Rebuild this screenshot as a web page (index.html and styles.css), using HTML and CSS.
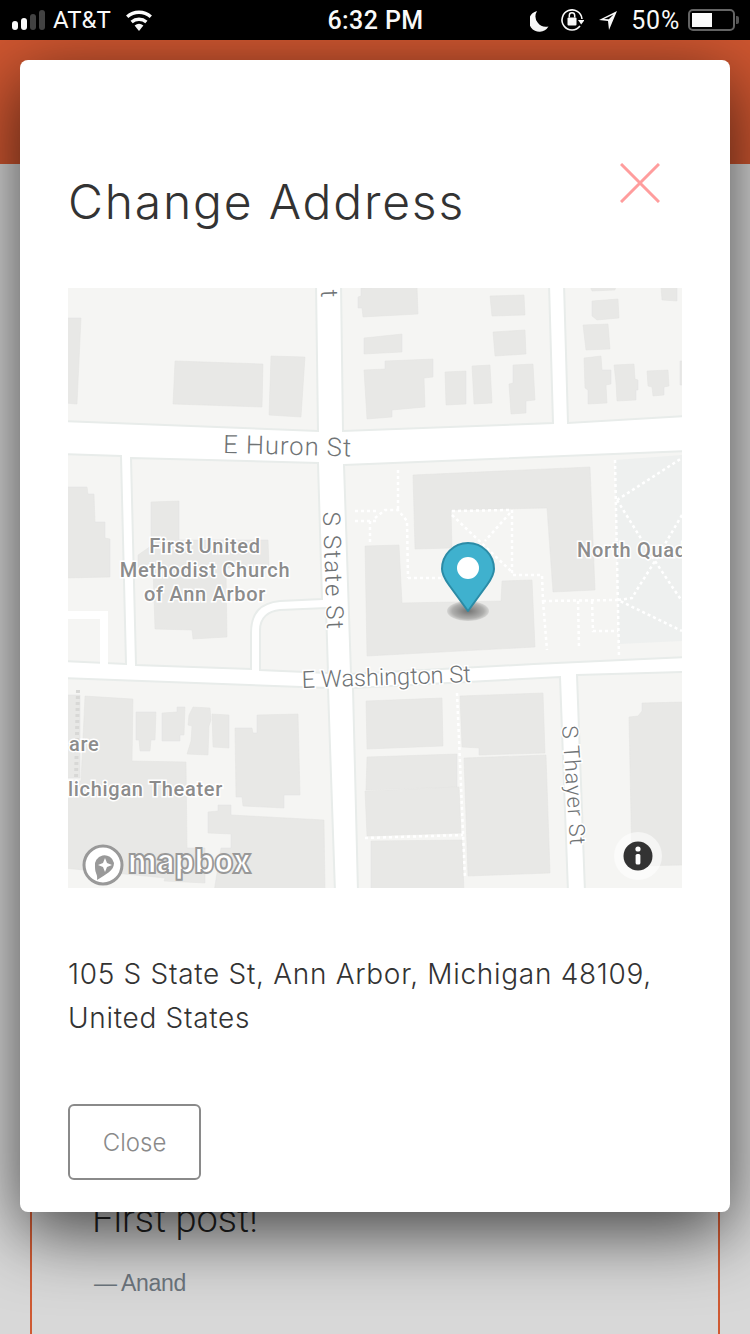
FILE: index.html
```html
<!DOCTYPE html>
<html lang="en">
<head>
    <meta charset="UTF-8">
    <meta name="viewport" content="width=device-width, initial-scale=1.0">
    <title>Change Address</title>
    <link rel="stylesheet" href="styles.css">
</head>
<body>

<div class="status-bar">
    <div class="status-left">
        <div class="signal">
            <span class="bar bar-1"></span>
            <span class="bar bar-2"></span>
            <span class="bar bar-3"></span>
            <span class="bar bar-4"></span>
        </div>
        <span class="carrier">AT&amp;T</span>
        <svg class="wifi" width="30" height="24" viewBox="0 0 30 24">
            <path d="M15 23 L10.6 17.6 A7 7 0 0 1 19.4 17.6 Z" fill="#fff"/>
            <path d="M7.6 14 A11.5 11.5 0 0 1 22.4 14" fill="none" stroke="#fff" stroke-width="3.4"/>
            <path d="M3.2 8.8 A17.6 17.6 0 0 1 26.8 8.8" fill="none" stroke="#fff" stroke-width="3.4"/>
        </svg>
    </div>
    <div class="status-time">6:32 PM</div>
    <div class="status-right">
        <svg class="moon" width="20" height="24" viewBox="0 0 20 24">
            <path d="M7 3 A10.5 10.5 0 0 0 18.5 18.5 A10.5 10.5 0 1 1 7 3 Z" fill="#fff"/>
        </svg>
        <svg class="lock" width="24" height="28" viewBox="0 0 24 28">
            <path d="M20 20 A10 10 0 1 1 22 13" fill="none" stroke="#fff" stroke-width="1.6"/>
            <path d="M18.5 13 L25 13 L21.7 17.5 Z" fill="#fff" transform="translate(-0.5 1)"/>
            <rect x="7.5" y="11.5" width="9" height="8" rx="1" fill="#fff"/>
            <path d="M9.3 11.5 V9.5 A2.7 2.7 0 0 1 14.7 9.5 V11.5" fill="none" stroke="#fff" stroke-width="1.5"/>
        </svg>
        <svg class="arrow" width="20" height="24" viewBox="0 0 20 24">
            <path d="M19 3 L1 12 L10 13 L11 22 Z M15.5 6.5 L10.8 11.3 L6 11 Z" fill="#fff" fill-rule="evenodd"/>
        </svg>
        <span class="percent">50%</span>
        <div class="battery"><span class="battery-level"></span></div>
        <span class="battery-tip"></span>
    </div>
</div>

<div class="site-header"></div>

<div class="main">
    <div class="post-card">
        <h2 class="post-title">First post!</h2>
        <p class="post-author">—&#8201;Anand</p>
    </div>
</div>

<div class="modal">
    <div class="modal-head">
        <h1 class="modal-title">Change Address</h1>
        <svg class="modal-close" width="40" height="40" viewBox="0 0 40 40">
            <path d="M1 1 L39 39 M39 1 L1 39" stroke="#ff9d9d" stroke-width="3" fill="none"/>
        </svg>
    </div>

    <svg class="map" width="614" height="600" viewBox="0 0 614 600">
        <defs>
            <radialGradient id="pinShadow">
                <stop offset="0" stop-color="#000" stop-opacity=".5"/>
                <stop offset=".75" stop-color="#000" stop-opacity=".25"/>
                <stop offset="1" stop-color="#000" stop-opacity=".08"/>
            </radialGradient>
        </defs>
        <rect width="614" height="600" fill="#fff"/>

        <!-- blocks -->
        <g class="blocks">
            <polygon points="-4,-4 248,-4 250,143 -4,133"/>
            <polygon points="273,-4 481,-4 485,135 275,143"/>
            <polygon points="496,-4 618,-4 618,128 500,135"/>
            <polygon points="-4,166 53,168 58,376 -4,373"/>
            <path d="M63 170 L250 175 L254 311 L212 313 C192 315 183 325 183 345 L183 381 L68 377 Z"/>
            <path d="M212 322 L258 320 L260 385 L192 382 L192 342 C192 330 200 323 212 322 Z"/>
            <polygon points="276,177 618,163 618,369 466,376 283,386"/>
            <polygon points="-4,390 260,400 267,604 -4,604"/>
            <polygon points="285,400 492,389 500,604 290,604"/>
            <polygon points="509,387 618,384 618,604 517,604"/>
        </g>
        <path class="lane" d="M-4 327 H36 V378"/>
        <polygon class="park" points="547,172 614,167 614,353 551,356"/>

        <!-- buildings -->
        <g class="buildings">
            <polygon points="-4,30 13,30 9,116 -4,115"/>
            <polygon points="107,73 195,76 194,119 105,116"/>
            <polygon points="203,68 237,69 233,129 201,127"/>
            <polygon points="293,0 349,-2 350,26 295,29 294,20 290,20 290,9 293,8"/>
            <polygon points="296,50 334,46 334,64 296,66"/>
            <polygon points="296,82 317,81 317,73 365,71 365,89 356,90 357,119 324,122 324,129 299,131"/>
            <polygon points="422,8 456,7 457,27 424,28"/>
            <polygon points="425,44 457,42 458,66 427,68"/>
            <polygon points="377,84 398,83 398,116 378,117"/>
            <polygon points="404,78 422,77 424,115 406,116"/>
            <polygon points="445,77 465,76 467,112 458,113 458,125 443,126 441,96 445,95"/>
            <polygon points="522,-2 548,-2 547,2 524,3"/>
            <polygon points="593,-2 609,-2 609,13 594,12"/>
            <polygon points="524,13 550,11 551,30 529,32 524,28"/>
            <polygon points="515,37 540,36 542,61 518,62"/>
            <polygon points="516,70 533,68 534,82 543,82 543,96 538,97 539,115 520,116 520,102 517,100"/>
            <polygon points="546,77 566,76 567,91 570,92 570,102 568,102 568,112 549,113 548,95"/>
            <polygon points="579,83 600,82 601,98 596,99 596,107 585,108 584,99 580,98"/>
            <polygon points="612,73 616,73 616,97 612,97"/>
            <polygon points="345,187 522,179 527,302 485,304 479,220 383,222 384,260 347,261"/>
            <polygon points="297,258 331,257 334,315 433,313 434,293 464,292 467,359 299,368"/>
            <polygon points="-4,199 19,199 20,206 26,206 27,234 37,234 37,250 42,251 42,289 -4,290"/>
            <polygon points="83,214 111,213 111,252 200,252 201,278 158,280 159,349 125,351 124,342 87,341 85,280 70,280 70,267 83,258"/>
            <polygon points="-4,407 12,407 12,490 -4,490"/>
            <polygon points="17,408 65,411 64,473 118,474 119,560 137,560 137,595 96,593 97,590 -4,580 -4,493 13,493"/>
            <polygon points="68,424 88,424 87,452 83,452 82,463 72,463 71,452 68,452"/>
            <polygon points="94,425 109,424 109,419 117,419 116,447 112,447 112,453 94,453"/>
            <polygon points="125,419 142,420 143,432 141,438 140,467 119,466 123,453 124,438 120,437 121,427"/>
            <polygon points="144,426 161,427 161,460 145,459"/>
            <polygon points="167,440 184,440 185,445 189,445 189,427 230,426 232,507 216,507 216,520 175,518 174,509 168,509"/>
            <polygon points="140,524 150,523 150,517 163,517 163,527 256,532 257,604 146,604 153,560 163,560 163,546 140,545"/>
            <polygon points="298,413 374,410 375,458 299,461"/>
            <polygon points="299,469 389,466 389,499 298,502"/>
            <polygon points="297,503 391,499 393,545 299,548"/>
            <polygon points="303,553 394,552 396,604 303,604"/>
            <polygon points="392,408 475,405 477,465 411,467 411,460 394,459"/>
            <polygon points="396,470 478,467 482,585 400,588"/>
            <polygon points="574,415 618,414 618,577 564,578 561,429 570,428 574,423"/>
        </g>

        <!-- footpaths -->
        <g class="paths">
            <path d="M547 172 L551 370"/>
            <path d="M549 212 L614 170"/>
            <path d="M549 212 L587 273 L605 300 L614 313"/>
            <path d="M614 227 L587 273 L570 300 L564 310 L550 312 L614 343"/>
            <path d="M475 313 L550 312"/>
            <path d="M475 313 L479 362"/>
            <path d="M510 313 L511 360"/>
            <path d="M524 313 L525 343 L550 343"/>
            <path d="M444 222 L444 287 L474 287 L475 313"/>
            <path d="M340 290 L382 290"/>
            <path d="M307 230 L317 222 L330 222 L339 233 L340 290"/>
            <path d="M330 182 L330 222"/>
            <path d="M384 223 L442 222"/>
            <path d="M384 227 L445 285"/>
            <path d="M442 225 L417 253"/>
            <path d="M287 223 L310 223"/>
            <path d="M287 233 L310 233"/>
            <path d="M302 233 L302 257"/>
            <path d="M389 405 L397 590"/>
            <path d="M297 550 L395 547"/>
        </g>
        <path class="paths-grey" d="M10 402 L8 493"/>

        <!-- labels -->
        <g class="labels">
            <text class="street huron" transform="translate(155 165) rotate(1.5)">E Huron St</text>
            <text class="street state" transform="translate(253 2) rotate(88)">t</text>
            <text class="street state" transform="translate(255 224) rotate(88)">S State St</text>
            <text class="street washington" transform="translate(234 400) rotate(-2)">E Washington St</text>
            <text class="street thayer" transform="translate(494 438) rotate(86)">S Thayer St</text>
            <text class="place" x="137" y="265" text-anchor="middle">First United</text>
            <text class="place" x="137" y="289" text-anchor="middle">Methodist Church</text>
            <text class="place" x="137" y="313" text-anchor="middle">of Ann Arbor</text>
            <text class="place" x="509" y="269">North Quad</text>
            <text class="place" x="1" y="463">are</text>
            <text class="place" x="0" y="508">lichigan Theater</text>
        </g>

        <!-- pin -->
        <ellipse cx="400" cy="323" rx="21" ry="10" fill="url(#pinShadow)"/>
        <path d="M400 323 L381 297 C376 290 374 286 374 281 A26 26 0 0 1 426 281 C426 286 424 290 419 297 Z" fill="#3fb1ce" stroke="#2b8ba6" stroke-width="2" stroke-linejoin="round"/>
        <circle cx="400" cy="280" r="11" fill="#fff"/>

        <!-- mapbox logo -->
        <circle cx="35" cy="577" r="19" fill="#fff" stroke="#999" stroke-width="3"/>
        <path d="M29 592 C30 586 27 586 27 579 A9.5 9.5 0 0 1 46 575 C46 583 38 586 29 592 Z" fill="#999"/>
        <path d="M37 570 L39 575 L44 577 L39 579 L37 584 L35 579 L30 577 L35 575 Z" fill="#fff"/>
        <text class="logo-text" x="60" y="585" textLength="123" lengthAdjust="spacingAndGlyphs">mapbox</text>

        <!-- info button -->
        <circle cx="570" cy="568" r="24" fill="#fff" fill-opacity=".55"/>
        <circle cx="570" cy="568" r="14.5" fill="#333"/>
        <circle cx="570" cy="561" r="2.6" fill="#fff"/>
        <rect x="567.6" y="566" width="4.8" height="10.5" rx="1.6" fill="#fff"/>
    </svg>

    <p class="address">105 S State St, Ann Arbor, Michigan 48109,<br>United States</p>

    <button class="close-button" type="button">Close</button>
</div>

</body>
</html>
```

FILE: styles.css
```css
html, body {
    height: 1334px;
    overflow: hidden;
}
body {
    position: relative;
    margin: 0;
    font-family: "Liberation Sans", Arial, sans-serif;
    background-color: #d8d8d8;
}

/* status bar */
.status-bar {
    height: 40px;
    background-color: #000;
    color: #fff;
    display: flex;
    align-items: center;
    justify-content: space-between;
    padding: 0 11px 0 12px;
    box-sizing: border-box;
    font-family: Roboto, sans-serif;
    font-size: 24px;
    position: relative;
}
.status-left {
    display: flex;
    align-items: center;
    width: 270px;
}
.signal {
    display: flex;
    align-items: flex-end;
    gap: 3px;
    height: 20px;
    margin-right: 8px;
}
.bar {
    width: 6px;
    border-radius: 3px;
    background-color: #444;
}
.bar-1 { height: 9px; background-color: #fff; }
.bar-2 { height: 12px; background-color: #fff; }
.bar-3 { height: 16px; }
.bar-4 { height: 20px; }
.carrier {
    margin-right: 13px;
}
.status-time {
    font-size: 25px;
    font-weight: 500;
    letter-spacing: .4px;
}
.status-right {
    display: flex;
    align-items: center;
    justify-content: flex-end;
    width: 270px;
}
.moon { margin-right: 10px; }
.lock { margin-right: 14px; }
.arrow { margin-right: 13px; }
.percent {
    margin-right: 8px;
    font-size: 25px;
    letter-spacing: .8px;
}
.battery {
    width: 47px;
    height: 22px;
    box-sizing: border-box;
    border: 2px solid #666;
    border-radius: 5px;
    padding: 2px;
}
.battery-level {
    display: block;
    width: 20px;
    height: 14px;
    background-color: #fff;
}
.battery-tip {
    width: 3px;
    height: 8px;
    margin-left: 1px;
    background-color: #555;
    border-radius: 0 2px 2px 0;
}

/* page behind the dialog */
.site-header {
    height: 124px;
    background-color: #ce5630;
}
.main {
    padding: 936px 30px 0;
}
.post-card {
    height: 300px;
    box-sizing: border-box;
    border: 2px solid #cf5a33;
    padding: 95px 60px 0;
}
.post-title {
    margin: 0;
    font-family: Roboto, sans-serif;
    font-size: 38px;
    font-weight: 300;
    color: #222;
}
.post-author {
    margin: 29px 0 0 2px;
    font-size: 23px;
    color: #6c757d;
    letter-spacing: -.3px;
}

/* dialog */
.modal {
    position: absolute;
    left: 20px;
    top: 60px;
    width: 710px;
    height: 1152px;
    box-sizing: border-box;
    padding: 0 48px;
    background-color: #fff;
    border-radius: 8px;
    box-shadow: 0 20px 70px rgba(0, 0, 0, .7);
    font-family: Inter, sans-serif;
    font-weight: 300;
}
.modal-head {
    height: 228px;
    display: flex;
    justify-content: space-between;
    padding: 103px 22px 0 0;
    box-sizing: border-box;
}
.modal-title {
    margin: 11px 0 0;
    font-size: 48px;
    line-height: 56px;
    font-weight: 300;
    letter-spacing: 1.8px;
    color: #333;
}
.modal-close {
    display: block;
}
.map {
    display: block;
}
.address {
    margin: 64px 0 0;
    font-size: 28px;
    line-height: 44px;
    letter-spacing: .7px;
    color: #333;
}
.close-button {
    display: block;
    width: 133px;
    height: 76px;
    margin-top: 64px;
    background-color: #fff;
    border: 2px solid #8a8a8a;
    border-radius: 6px;
    font-family: Inter, sans-serif;
    font-size: 24px;
    font-weight: 300;
    color: #8a8a8a;
}

/* map layers */
.blocks > * {
    fill: #f5f5f3;
    stroke: #e8ecea;
    stroke-width: 2;
}
.lane {
    fill: none;
    stroke: #fff;
    stroke-width: 8;
}
.park {
    fill: #eef0ef;
}
.buildings polygon {
    fill: #e8e8e6;
    stroke: #e3e3e1;
    stroke-width: .5;
}
.paths path {
    fill: none;
    stroke: #fff;
    stroke-width: 2.5;
    stroke-dasharray: 3 3;
}
.paths-grey {
    fill: none;
    stroke: #d8d8d6;
    stroke-width: 4;
    stroke-dasharray: 3 3;
}
.labels text {
    font-family: Roboto, sans-serif;
    paint-order: stroke;
    stroke: #fff;
}
.street {
    fill: #6f7375;
    stroke-width: 3;
}
.huron {
    font-size: 25.5px;
    letter-spacing: 1px;
}
.state {
    font-size: 24px;
    letter-spacing: 1.6px;
}
.washington {
    font-size: 23.5px;
}
.thayer {
    font-size: 22px;
    letter-spacing: 1px;
}
.place {
    fill: #8c8c8c;
    font-size: 20px;
    font-weight: 500;
    letter-spacing: .7px;
    stroke-width: 3;
}
.logo-text {
    font-family: Inter, sans-serif;
    font-size: 34px;
    font-weight: 800;
    fill: #fff;
    stroke: #999;
    stroke-width: 2;
}
```
